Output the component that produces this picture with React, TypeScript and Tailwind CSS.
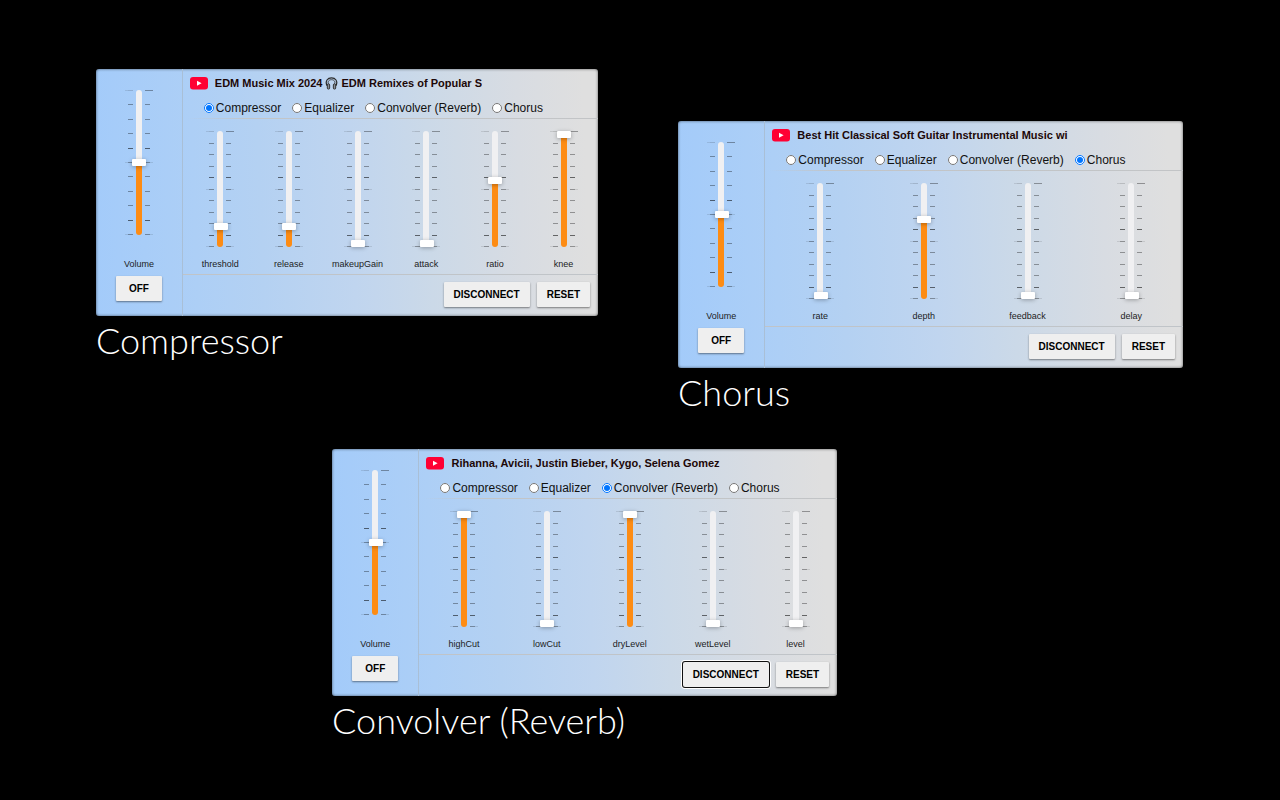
import { useId, useState } from "react";
import clsx from "clsx";

type Param = { name: string; value: number };
type RackProps = {
  caption: string;
  title: React.ReactNode;
  params: Param[];
  focused?: boolean;
};

const EFFECTS = ["Compressor", "Equalizer", "Convolver (Reverb)", "Chorus"];
const TICKS = [0, 1, 2, 3, 4, 5, 6, 7, 8, 9, 10];

function YouTubeIcon() {
  return (
    <svg viewBox="0 0 18 13" className="h-[13px] w-[18px] shrink-0" aria-hidden="true">
      <rect width="18" height="12.6" rx="3" fill="#ff0033" />
      <path d="M7 3.8v5l4.6-2.5z" fill="#fff" />
    </svg>
  );
}

function HeadphonesIcon() {
  return (
    <svg viewBox="0 0 14 14" className="mx-[3px] inline-block size-[13px] align-[-3px]" fill="none" stroke="#2a2a2a" aria-hidden="true">
      <path d="M2.2 9.4C-.3 4.200 3 .9 7 .9s7.300 3.300 4.800 8.500" strokeWidth="1.3" />
      <path d="M3.700 7.400C2.500 4.800 4.400 2.900 7 2.900s4.500 1.900 3.300 4.500" strokeWidth=".9" />
      <rect x="2.500" y="7.400" width="2.500" height="5.600" rx="1.100" fill="#8a8f98" />
      <rect x="9" y="7.400" width="2.500" height="5.600" rx="1.100" fill="#8a8f98" />
    </svg>
  );
}

function TickMarks() {
  return (
    <div className="pointer-events-none absolute inset-0 flex flex-col justify-between" aria-hidden="true">
      {TICKS.map((i) => {
        const wide = i % 5 === 0;
        const tone = i === 4 || i === 9 ? "bg-black/55" : "bg-black/35";
        return (
          <div key={i} className="flex h-px items-center justify-between">
            <div className="flex w-2 justify-end">
              {wide && <span className="h-px w-[3px] bg-black/10" />}
              <span className={clsx("h-px w-[5px]", i === 0 ? "bg-black/15" : tone)} />
            </div>
            <div className="flex w-2">
              <span className={clsx("h-px w-[5px]", tone)} />
              {wide && <span className={clsx("h-px w-[3px]", i === 0 ? "bg-black/35" : "bg-black/10")} />}
            </div>
          </div>
        );
      })}
    </div>
  );
}

function Fader({ name, value, tall }: Param & { tall?: boolean }) {
  const id = useId();
  const [level, setLevel] = useState(value);
  return (
    <div className="flex flex-col items-center">
      <div className={clsx("relative flex w-7 justify-center", tall ? "h-[145px]" : "h-[116px]")}>
        <TickMarks />
        <input
          id={id}
          type="range"
          min={0}
          max={100}
          value={level}
          onChange={(e) => setLevel(Number(e.target.value))}
          className="relative m-0 h-full w-1.5 appearance-none rounded-full bg-[#f0f0f2] [direction:rtl] [writing-mode:vertical-lr] [&::-webkit-slider-thumb]:ml-[1px] [&::-webkit-slider-thumb]:h-[7px] [&::-webkit-slider-thumb]:w-[14px] [&::-webkit-slider-thumb]:appearance-none [&::-webkit-slider-thumb]:rounded-[1px] [&::-webkit-slider-thumb]:bg-white [&::-webkit-slider-thumb]:shadow-[0_1px_4px_rgba(0,0,0,0.3)]"
          style={{ backgroundImage: `linear-gradient(to top, #fd8c14 ${level}%, #f0f0f2 ${level}%)` }}
        />
      </div>
      <label htmlFor={id} className={clsx("text-[9px] leading-3 text-[#1c1c1c]", tall ? "mt-[23px]" : "mt-[11px]")}>
        {name}
      </label>
    </div>
  );
}

function PushButton({ children, focused }: { children: string; focused?: boolean }) {
  return (
    <button
      type="button"
      className={clsx(
        "h-[25px] min-w-[46px] bg-[#efefef] px-2.5 text-[10px] font-bold text-black",
        focused
          ? "rounded-[2px] shadow-[0_0_0_1px_#101010,0_0_0_2px_#ffffff]"
          : "rounded-[1px] shadow-[0_1px_2px_rgba(0,0,0,0.45)]",
      )}
    >
      {children}
    </button>
  );
}

function Rack({ caption, title, params, focused }: RackProps) {
  const group = useId();
  const [effect, setEffect] = useState(caption);
  return (
    <figure className="w-full">
      <section className="flex rounded-[3px] bg-[linear-gradient(88deg,#a3cbfa_0%,#adcff6_20%,#b4d1f2_33%,#c0d5ef_51%,#cbd9e8_66%,#d8dce2_84%,#dfdfdf_97%)] shadow-[inset_0_0_3px_rgba(0,0,0,0.6)]">
        <div className="flex w-[17.3%] shrink-0 flex-col items-center border-r border-[#a9bfd6] pt-[21px]">
          <Fader name="Volume" value={50} tall />
          <div className="mt-[5px]">
            <PushButton>OFF</PushButton>
          </div>
        </div>
        <div className="min-w-0 flex-1">
          <header className="flex h-7 items-center gap-[7px] pl-[7px]">
            <YouTubeIcon />
            <h2 className="max-w-[274px] overflow-hidden text-[11px] font-bold whitespace-nowrap text-[#1d0808]">{title}</h2>
          </header>
          <div className="flex h-[21px] items-center gap-[11px] pl-[21px] text-[12px]">
            {EFFECTS.map((name) => (
              <label key={name} className="flex items-center gap-[2px] whitespace-nowrap text-[#111]">
                <input
                  type="radio"
                  name={group}
                  checked={effect === name}
                  onChange={() => setEffect(name)}
                  className="m-0 size-[10px]"
                />
                {name}
              </label>
            ))}
          </div>
          <div className="ml-1 h-px bg-linear-to-r from-transparent via-[#c2c5c8] via-15% to-[#c2c4c6]" />
          <div className="flex pt-3 pl-[3px]">
            {params.map((p) => (
              <div key={p.name} className="flex-1">
                <Fader {...p} />
              </div>
            ))}
          </div>
          <div className="mt-1 flex justify-end gap-[7px] border-t border-[#c0c4c8] pt-[7px] pr-2 pb-[9px]">
            <PushButton focused={focused}>DISCONNECT</PushButton>
            <PushButton>RESET</PushButton>
          </div>
        </div>
      </section>
      <figcaption className="font-[Lato,sans-serif] text-[36px] leading-12 font-light text-white">{caption}</figcaption>
    </figure>
  );
}

export default function App() {
  return (
    <main className="min-h-screen bg-black px-24 pt-[69px] pb-12 font-['Liberation_Sans',Arial,sans-serif]">
      <div className="flex items-start justify-between gap-19">
        <div className="flex w-full max-w-[502px]">
          <Rack
            caption="Compressor"
            title={
              <>
                EDM Music Mix 2024
                <HeadphonesIcon />
                EDM Remixes of Popular S
              </>
            }
            params={[
              { name: "threshold", value: 16 },
              { name: "release", value: 16 },
              { name: "makeupGain", value: 0 },
              { name: "attack", value: 0 },
              { name: "ratio", value: 58 },
              { name: "knee", value: 100 },
            ]}
          />
        </div>
        <div className="mt-13 mr-px flex w-full max-w-[505px]">
          <Rack
            caption="Chorus"
            title="Best Hit Classical Soft Guitar Instrumental Music wi"
            params={[
              { name: "rate", value: 0 },
              { name: "depth", value: 70 },
              { name: "feedback", value: 0 },
              { name: "delay", value: 0 },
            ]}
          />
        </div>
      </div>
      <div className="mt-[33px] ml-[21.7%] w-full max-w-[505px]">
        <Rack
          caption="Convolver (Reverb)"
          title="Rihanna, Avicii, Justin Bieber, Kygo, Selena Gomez"
          focused
          params={[
            { name: "highCut", value: 100 },
            { name: "lowCut", value: 0 },
            { name: "dryLevel", value: 100 },
            { name: "wetLevel", value: 0 },
            { name: "level", value: 0 },
          ]}
        />
      </div>
    </main>
  );
}
